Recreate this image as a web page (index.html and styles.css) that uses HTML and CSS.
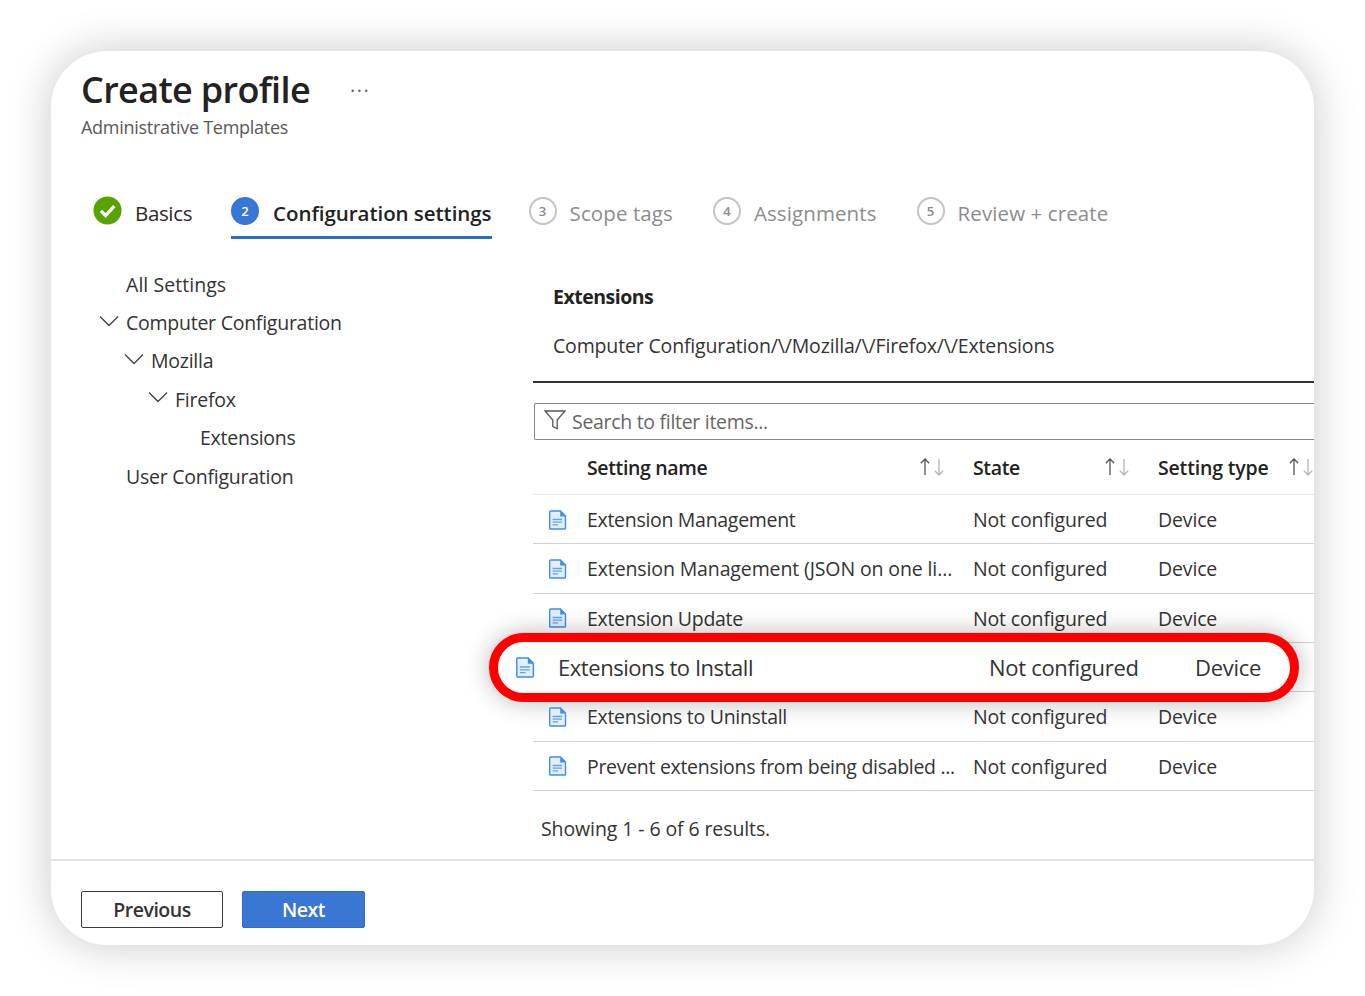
FILE: index.html
```html
<!DOCTYPE html>
<html lang="en">
<head>
<meta charset="utf-8">
<title>Create profile</title>
<link rel="stylesheet" href="styles.css">
</head>
<body>
<svg class="defs" width="0" height="0" aria-hidden="true">
  <defs>
    <symbol id="doc" viewBox="0 0 18 20">
      <path d="M1.5 1h10l5 5v12.2a.8.8 0 0 1-.8.8H1.5a.8.8 0 0 1-.8-.8V1.8a.8.8 0 0 1 .8-.8z" fill="#e3effc" stroke="#3f8fe8" stroke-width="1.4"/>
      <path d="M11.2 1v5.4h5.4z" fill="#3f8fe8"/>
      <path d="M3.6 9.5h9.5M3.6 12.2h9.5M3.6 14.9h5.5" fill="none" stroke="#5fa3ec" stroke-width="1.3"/>
    </symbol>
    <symbol id="sort" viewBox="0 0 26 20">
      <path d="M6 18V2M1.8 6.2 6 2l4.2 4.2" fill="none" stroke="#555" stroke-width="1.3"/>
      <path d="M20 2v16M15.8 13.8 20 18l4.2-4.2" fill="none" stroke="#b5b5b5" stroke-width="1.3"/>
    </symbol>
    <symbol id="chev" viewBox="0 0 20 12">
      <path d="M1 1.5 10 10.5 19 1.5" fill="none" stroke="#444" stroke-width="1.4"/>
    </symbol>
  </defs>
</svg>

<main class="card">
  <header class="head">
    <div class="title-row">
      <h1 class="title">Create profile</h1>
      <span class="more">···</span>
    </div>
    <p class="subtitle">Administrative Templates</p>
  </header>

  <nav class="steps">
    <div class="step">
      <svg class="check" viewBox="0 0 30 30" aria-hidden="true">
        <circle cx="15" cy="15" r="14.5" fill="#57a300"/>
        <path d="M8.2 15.4 13 20.2 22 10.6" fill="none" stroke="#fff" stroke-width="3.4"/>
      </svg>
      <span class="step-label">Basics</span>
    </div>
    <div class="step step-active">
      <span class="num num-active">2</span>
      <span class="step-label strong">Configuration settings</span>
    </div>
    <div class="step">
      <span class="num">3</span>
      <span class="step-label muted">Scope tags</span>
    </div>
    <div class="step">
      <span class="num">4</span>
      <span class="step-label muted">Assignments</span>
    </div>
    <div class="step">
      <span class="num">5</span>
      <span class="step-label muted">Review + create</span>
    </div>
  </nav>

  <div class="body">
    <ul class="tree">
      <li class="node lvl0 node-top">All Settings</li>
      <li class="node lvl0"><svg class="chev"><use href="#chev"/></svg>Computer Configuration</li>
      <li class="node lvl1"><svg class="chev"><use href="#chev"/></svg>Mozilla</li>
      <li class="node lvl2"><svg class="chev"><use href="#chev"/></svg>Firefox</li>
      <li class="node lvl3">Extensions</li>
      <li class="node lvl0">User Configuration</li>
    </ul>

    <section class="panel">
      <div class="panel-head">
        <h2 class="panel-title">Extensions</h2>
        <p class="path">Computer Configuration/\/Mozilla/\/Firefox/\/Extensions</p>
      </div>

      <div class="search">
        <svg class="funnel" viewBox="0 0 22 20" aria-hidden="true">
          <path d="M1 1h20l-7.8 9v8.6l-4.4-2V10z" fill="none" stroke="#555" stroke-width="1.3"/>
        </svg>
        <span class="placeholder">Search to filter items...</span>
      </div>

      <div class="thead">
        <div class="th th-name">Setting name<svg class="sort"><use href="#sort"/></svg></div>
        <div class="th th-state">State<svg class="sort"><use href="#sort"/></svg></div>
        <div class="th th-type">Setting type<svg class="sort"><use href="#sort"/></svg></div>
      </div>

      <div class="row">
        <svg class="doc"><use href="#doc"/></svg>
        <span class="cell-name">Extension Management</span><span class="cell-state">Not configured</span><span class="cell-type">Device</span>
      </div>
      <div class="row">
        <svg class="doc"><use href="#doc"/></svg>
        <span class="cell-name cell-long">Extension Management (JSON on one li...</span><span class="cell-state">Not configured</span><span class="cell-type">Device</span>
      </div>
      <div class="row">
        <svg class="doc"><use href="#doc"/></svg>
        <span class="cell-name">Extension Update</span><span class="cell-state">Not configured</span><span class="cell-type">Device</span>
      </div>
      <div class="row">
        <div class="callout">
          <svg class="doc doc-big"><use href="#doc"/></svg>
          <span class="call-name">Extensions to Install</span><span class="call-state">Not configured</span><span>Device</span>
        </div>
      </div>
      <div class="row">
        <svg class="doc"><use href="#doc"/></svg>
        <span class="cell-name">Extensions to Uninstall</span><span class="cell-state">Not configured</span><span class="cell-type">Device</span>
      </div>
      <div class="row">
        <svg class="doc"><use href="#doc"/></svg>
        <span class="cell-name">Prevent extensions from being disabled ...</span><span class="cell-state">Not configured</span><span class="cell-type">Device</span>
      </div>

      <p class="results">Showing 1 - 6 of 6 results.</p>
    </section>
  </div>

  <footer class="foot">
    <button class="btn btn-prev" type="button">Previous</button>
    <button class="btn btn-next" type="button">Next</button>
  </footer>
</main>
</body>
</html>
```

FILE: styles.css
```css
* { box-sizing: border-box; }
html, body { margin: 0; height: 996px; overflow: hidden; }
body {
  background: #fff;
  padding: 51px;
  font-family: "Open Sans", "Noto Sans", "Liberation Sans", sans-serif;
  color: #2b2a29;
}
.defs { position: absolute; }
.card {
  width: 1263px;
  height: 894px;
  background: #fff;
  border-radius: 56px;
  box-shadow: 0 0 44px rgba(0, 0, 0, 0.22);
  overflow: hidden;
  display: flex;
  flex-direction: column;
}
.head { padding: 14px 0 0 30px; height: 140px; }
.title-row { display: flex; align-items: center; }
.title {
  margin: 0;
  font-size: 36px;
  line-height: 50px;
  font-weight: 600;
  letter-spacing: -0.65px;
  color: #222;
}
.more { margin-left: 40px; font-size: 20px; letter-spacing: 1.5px; color: #666; }
.subtitle {
  margin: 0;
  font-size: 18px;
  line-height: 24px;
  letter-spacing: -0.27px;
  color: #5a5958;
}
.steps {
  display: flex;
  align-items: flex-start;
  gap: 40px;
  padding-left: 42px;
  height: 49px;
}
.step { display: flex; align-items: center; height: 48px; padding-bottom: 5px; }
.step:first-child { margin-right: -1px; }
.step-active { border-bottom: 3px solid #2470d1; padding-bottom: 2px; margin-right: -3px; }
.check { width: 29px; height: 29px; margin-right: 13px; margin-top: -5px; }
.num {
  width: 28px;
  height: 28px;
  margin-right: 13px;
  margin-top: -4px;
  border: 2px solid #c4c4c4;
  border-radius: 50%;
  display: flex;
  align-items: center;
  justify-content: center;
  font-size: 13px;
  font-weight: 600;
  color: #8a8a8a;
}
.num-active { background: #3777d6; border-color: #3777d6; color: #fff; margin-right: 14px; }
.step-label { font-size: 20.5px; line-height: 28px; letter-spacing: -0.35px; white-space: nowrap; }
.strong { font-weight: 600; letter-spacing: -0.05px; color: #222; }
.muted { color: #8c8c8c; letter-spacing: 0.1px; }
.body { flex: 1; display: flex; min-height: 0; }
.tree {
  list-style: none;
  margin: 0;
  padding: 25px 0 0;
  width: 482px;
  flex: none;
}
.node {
  height: 38.4px;
  display: flex;
  align-items: center;
  font-size: 19.5px;
  letter-spacing: -0.25px;
  white-space: nowrap;
  color: #333;
}
.node-top { letter-spacing: 0.05px; }
.lvl0 { padding-left: 75px; }
.lvl1 { padding-left: 100px; }
.lvl2 { padding-left: 124px; }
.lvl3 { padding-left: 149px; }
.chev { width: 20px; height: 12px; margin-left: -27px; margin-right: 7px; margin-top: -4px; flex: none; }
.panel { flex: 1; min-width: 0; }
.panel-head { height: 143px; border-bottom: 2px solid #333; padding: 43px 0 0 20px; }
.panel-title { margin: 0; font-size: 19.5px; line-height: 28px; font-weight: 700; letter-spacing: -0.5px; color: #222; }
.path { margin: 21px 0 0; font-size: 19.5px; line-height: 28px; letter-spacing: -0.16px; color: #333; white-space: nowrap; }
.search {
  margin: 20px 0 0 1px;
  height: 37px;
  border: 1.5px solid #8a8886;
  border-right: 0;
  border-radius: 2px 0 0 2px;
  display: flex;
  align-items: center;
  padding-left: 9px;
}
.funnel { width: 22px; height: 20px; margin-right: 6px; margin-top: -3px; flex: none; }
.placeholder { font-size: 19.5px; letter-spacing: -0.3px; color: #666; white-space: nowrap; }
.thead {
  height: 55px;
  display: grid;
  grid-template-columns: 440px 185px 1fr;
  align-items: center;
  border-bottom: 1.5px solid #e8e8e8;
  overflow: hidden;
}
.th { display: flex; align-items: center; font-size: 19.5px; font-weight: 600; letter-spacing: -0.35px; color: #222; white-space: nowrap; }
.th-name { padding-left: 54px; }
.sort { width: 26px; height: 20px; flex: none; margin-left: auto; }
.th-name .sort { margin-right: 28px; }
.th-state .sort { margin-right: 28px; }
.th-type { letter-spacing: -0.17px; }
.th-type .sort { margin-left: 19px; }
.row {
  position: relative;
  height: 49.33px;
  padding-top: 1px;
  display: grid;
  grid-template-columns: 54px 386px 185px 1fr;
  align-items: center;
  border-bottom: 1.5px solid #d0d0d0;
  font-size: 19.5px;
  letter-spacing: -0.3px;
  color: #333;
  white-space: nowrap;
}
.cell-long { letter-spacing: -0.12px; }
.cell-state, .cell-type { letter-spacing: -0.15px; }
.doc { width: 18px; height: 20px; margin-left: 16px; }
.callout {
  position: absolute;
  top: -10px;
  left: -44px;
  width: 810px;
  height: 69px;
  border: 9px solid #f00;
  border-radius: 35px;
  background: #fff;
  box-shadow: 0 0 24px rgba(0, 0, 0, 0.28);
  display: grid;
  grid-template-columns: 60px 431px 206px 1fr;
  align-items: center;
  font-size: 22px;
  letter-spacing: -0.3px;
}
.call-name { letter-spacing: -0.45px; }
.doc-big { width: 19px; height: 21px; margin-left: 18px; }
.results { margin: 25px 0 0 8px; font-size: 19.5px; line-height: 26px; letter-spacing: -0.1px; color: #333; }
.foot {
  height: 86px;
  flex: none;
  border-top: 2px solid #e4e4e4;
  display: flex;
  align-items: flex-start;
  gap: 19px;
  padding: 30px 0 0 30px;
}
.btn {
  height: 37px;
  border-radius: 2px;
  font: 600 19.5px "Open Sans", "Noto Sans", sans-serif;
  letter-spacing: -0.5px;
  padding: 0 0 1px;
}
.btn-prev { width: 142px; background: #fff; border: 1.5px solid #3a3a3a; color: #333; }
.btn-next { width: 123px; background: #3a76d4; border: 1px solid #2f6bc9; color: #fff; }
```
